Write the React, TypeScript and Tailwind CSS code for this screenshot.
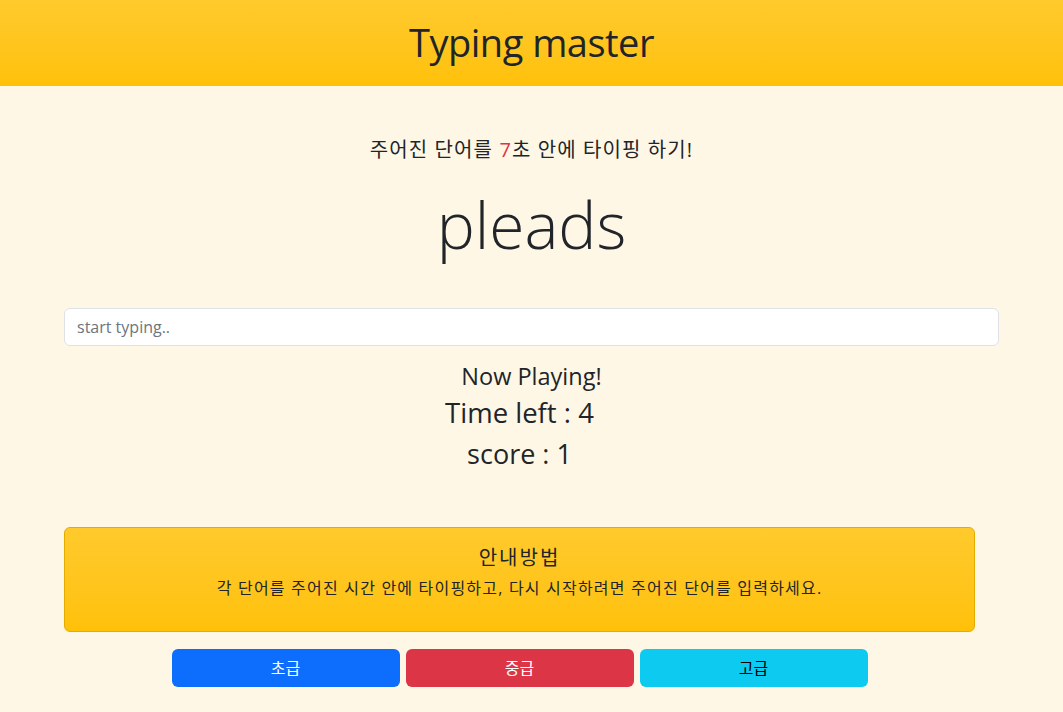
import React from "react";

export default function App() {
  return (
    <div className="min-h-[712px] w-full bg-[#fff7e6] text-[#212529] font-['Open_Sans','Noto_Sans_CJK_KR',sans-serif]">
      <header className="h-[86px] bg-gradient-to-b from-[#ffca2c] to-[#ffc107] flex items-center justify-center">
        <h1 className="text-[38px] leading-none font-normal tracking-[-0.5px] text-[#212529] -mt-[2px]">Typing master</h1>
      </header>
      <main className="px-[64px]">
        <p className="mt-[50px] text-center text-[20px] leading-[28px] tracking-[1.1px] text-[#212529]">
          주어진 단어를 <span className="text-[#dc3545]">7</span>초 안에 타이핑 하기!
        </p>
        <div className="mt-[20px] text-center text-[64px] leading-[82px] font-light text-[#212529]">pleads</div>
        <input
          className="mt-[42px] block w-full h-[38px] rounded-[6px] border border-[#dee2e6] bg-white px-[12px] text-[16px] placeholder:text-[#6c757d] outline-none"
          placeholder="start typing.."
        />
        <div className="mt-[15px] text-center text-[23.5px] leading-[30px]">Now Playing!</div>
        <div className="pr-[24px] mt-[4px] text-center text-[27.5px] leading-[36px]">Time left : 4</div>
        <div className="pr-[24px] mt-[4px] text-center text-[27px] leading-[38px]">score : 1</div>
        <div className="mt-[54px] w-[911px] h-[105px] rounded-[6px] border border-[#e5ac00] bg-gradient-to-b from-[#ffca2c] to-[#ffc107] flex flex-col items-center pt-[16px]">
          <div className="text-[20px] leading-[28px] tracking-[2px]">안내방법</div>
          <div className="mt-[5px] text-[16px] leading-[22px] tracking-[1.2px]">각 단어를 주어진 시간 안에 타이핑하고, 다시 시작하려면 주어진 단어를 입력하세요.</div>
        </div>
        <div className="mt-[17px] w-[911px] flex justify-center gap-[6px]">
          <button className="w-[228px] h-[38px] rounded-[6px] bg-[#0d6efd] text-white text-[16px]">초급</button>
          <button className="w-[228px] h-[38px] rounded-[6px] bg-[#dc3545] text-white text-[16px]">중급</button>
          <button className="w-[228px] h-[38px] rounded-[6px] bg-[#0dcaf0] text-black text-[16px]">고급</button>
        </div>
      </main>
    </div>
  );
}
